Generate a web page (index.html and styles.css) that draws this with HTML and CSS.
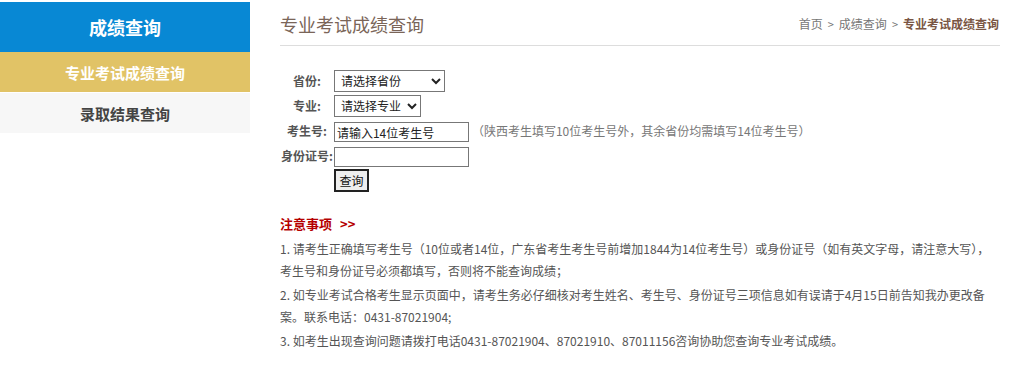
FILE: index.html
```html
<!DOCTYPE html>
<html lang="zh-CN">
<head>
<meta charset="utf-8">
<title>专业考试成绩查询</title>
<link rel="stylesheet" href="styles.css">
</head>
<body>
<div class="page">
  <aside class="sidebar">
    <div class="side-title">成绩查询</div>
    <a class="side-item active">专业考试成绩查询</a>
    <a class="side-item">录取结果查询</a>
  </aside>
  <main class="main">
    <div class="head">
      <h1 class="title">专业考试成绩查询</h1>
      <div class="crumb">首页<span class="sep">&gt;</span>成绩查询<span class="sep">&gt;</span><b>专业考试成绩查询</b></div>
    </div>
    <table class="form">
      <tr>
        <td class="lab">省份:</td>
        <td><select class="sel sel-prov"><option>请选择省份</option></select></td>
      </tr>
      <tr>
        <td class="lab">专业:</td>
        <td><select class="sel sel-major"><option>请选择专业</option></select></td>
      </tr>
      <tr>
        <td class="lab">考生号:</td>
        <td><input class="inp" type="text" value="请输入14位考生号"><span class="hint">（陕西考生填写10位考生号外，其余省份均需填写14位考生号）</span></td>
      </tr>
      <tr>
        <td class="lab">身份证号:</td>
        <td><input class="inp" type="text"></td>
      </tr>
      <tr>
        <td></td>
        <td><button class="btn">查询</button></td>
      </tr>
    </table>
    <div class="notes">
      <h2 class="notes-title">注意事项<span class="arr">&gt;&gt;</span></h2>
      <p>1. 请考生正确填写考生号（10位或者14位，广东省考生考生号前增加1844为14位考生号）或身份证号（如有英文字母，请注意大写），考生号和身份证号必须都填写，否则将不能查询成绩；</p>
      <p>2. 如专业考试合格考生显示页面中，请考生务必仔细核对考生姓名、考生号、身份证号三项信息如有误请于4月15日前告知我办更改备案。联系电话：0431-87021904;</p>
      <p>3. 如考生出现查询问题请拨打电话0431-87021904、87021910、87011156咨询协助您查询专业考试成绩。</p>
    </div>
  </main>
</div>
</body>
</html>
```

FILE: styles.css
```css
* { box-sizing: border-box; }
html, body { margin: 0; padding: 0; background: #fff; }
body {
  font-family: "Noto Sans CJK SC", "Noto Sans", "Liberation Sans", sans-serif;
  font-size: 12px;
  color: #555;
}
.page {
  display: flex;
  align-items: flex-start;
  padding-top: 2px;
}
.sidebar {
  width: 250px;
  flex: none;
  display: flex;
  flex-direction: column;
}
.side-title {
  height: 50px;
  background: #0888d4;
  color: #fff;
  font-size: 18px;
  font-weight: bold;
  display: flex;
  align-items: center;
  justify-content: center;
}
.side-item {
  height: 40px;
  display: flex;
  align-items: center;
  justify-content: center;
  font-size: 15px;
  font-weight: bold;
  color: #444;
  background: #f7f7f7;
  margin-top: 1px;
}
.side-item.active {
  background: #e1c366;
  color: #fff;
  margin-top: 0;
}
.main {
  width: 720px;
  margin-left: 30px;
}
.head {
  display: flex;
  justify-content: space-between;
  align-items: center;
  height: 44px;
  border-bottom: 1px solid #ddd;
}
.title {
  margin: 0;
  font-size: 18px;
  font-weight: normal;
  color: #7a6558;
  line-height: 1;
}
.crumb {
  font-size: 12px;
  color: #777;
  margin-right: 1px;
}
.crumb .sep { margin: 0 5px; font-size: 11px; }
.crumb b { color: #7a5644; }
.form {
  border-collapse: separate;
  border-spacing: 1px 0;
  margin-top: 22px;
}
.form td { padding: 0; height: 25px; vertical-align: middle; }
.form .lab {
  text-align: center;
  font-weight: bold;
  color: #555;
  white-space: nowrap;
}
.sel {
  height: 22px;
  font-family: inherit;
  font-size: 12px;
  color: #222;
  border: 1px solid #777;
  border-radius: 0;
  background: #fff;
  padding: 0 2px;
}
.sel-prov { width: 111px; }
.sel-major { width: 87px; }
.inp {
  width: 135px;
  height: 20px;
  margin-top: 3px;
  border: 1px solid #777;
  font-family: inherit;
  font-size: 12px;
  color: #222;
  padding: 0 2px;
  vertical-align: middle;
}
.hint {
  color: #777;
  margin-left: 3px;
  vertical-align: middle;
}
.btn {
  width: 35px;
  height: 23px;
  padding: 0;
  font-family: inherit;
  font-size: 12px;
  color: #111;
  background: #eee;
  border: 2px solid #222;
  border-radius: 0;
}
.notes { margin-top: 21px; }
.notes-title {
  margin: 0 0 5px;
  font-size: 13px;
  font-weight: bold;
  color: #b50000;
}
.notes-title .arr { margin-left: 8px; }
.notes p {
  margin: 0 0 2px;
  line-height: 22px;
  color: #555;
}
```
